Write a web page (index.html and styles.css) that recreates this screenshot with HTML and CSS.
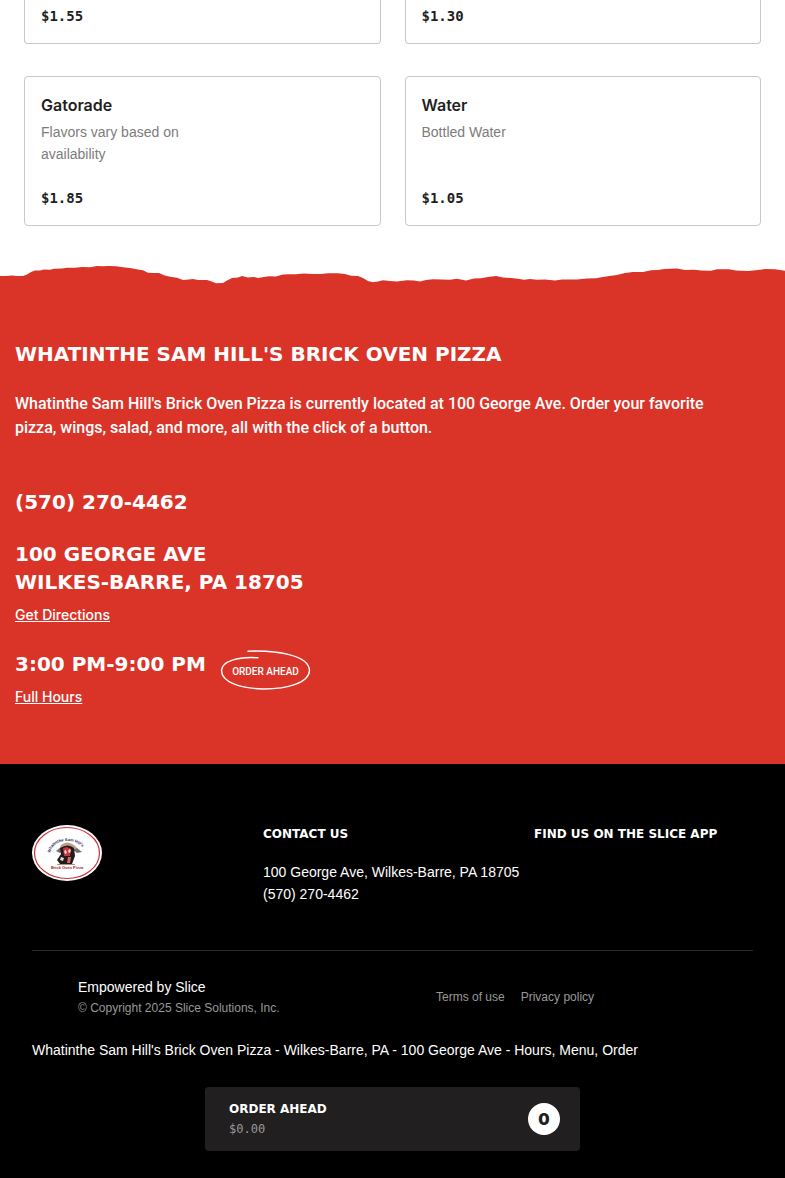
FILE: index.html
```html
<!DOCTYPE html>
<html lang="en">
<head>
<meta charset="utf-8">
<meta name="viewport" content="width=device-width, initial-scale=1">
<title>Whatinthe Sam Hill's Brick Oven Pizza</title>
<link rel="stylesheet" href="styles.css">
</head>
<body>
<main class="menu">
  <article class="card card-cut"><p class="price">$1.55</p></article>
  <article class="card card-cut"><p class="price">$1.30</p></article>
  <article class="card">
    <h3 class="name">Gatorade</h3>
    <p class="desc">Flavors vary based on availability</p>
    <p class="price">$1.85</p>
  </article>
  <article class="card">
    <h3 class="name">Water</h3>
    <p class="desc">Bottled Water</p>
    <p class="price">$1.05</p>
  </article>
</main>

<svg class="edge" viewBox="0 0 785 30" preserveAspectRatio="none" aria-hidden="true">
  <path fill="#da3429" d="M0 11 L6 11 L12 10.500 L17 11 L23 11 L27 9.500 L31 7 L35 5.500 L40 5.500 L44 4.500 L50 4.700 L54 3.800 L62 3.500 L67 2.800 L75 2.700 L82 2 L90 2.200 L97 1 L103 1.300 L109 1 L116 1.200 L123 2.300 L130 3 L138 4.500 L143 5.300 L148 7.700 L153 8 L159 8 L164 10.300 L170 11.700 L177 12.800 L183 15 L189 14.500 L193 14 L198 15 L207 15 L211 16.300 L216 18.200 L223 18 L227 15.500 L232 13 L238 12.500 L242 11 L248 12.400 L254 12 L258 13 L264 12 L269 11.300 L276 11.500 L283 9.500 L289 9.200 L296 9.300 L304 8.500 L312 9 L321 9 L328 8.200 L338 8.200 L345 9 L351 10.700 L358 11 L363 13 L368 16 L373 17.300 L378 16.600 L383 15.300 L390 16 L397 16.500 L407 15.300 L414 15.600 L420 16.500 L426 15 L433 14.300 L442 14.400 L450 14.800 L457 13.700 L466 15.500 L474 13.600 L481 13.200 L488 12 L496 11 L503 12.500 L511 13 L518 13.800 L524 14.800 L530 14 L537 14.700 L545 14.500 L555 15.600 L562 14.400 L577 14.600 L587 13.500 L596 13.200 L606 11.500 L617 10 L625 8 L633 7 L643 7 L651 5.200 L658 5 L664 4 L677 3.400 L685 5 L694 4.800 L701 5.600 L711 5.700 L717 4.300 L729 4.200 L736 5.600 L748 6 L758 5 L765 4 L775 4.200 L785 5.800 L785 30 L0 30 Z"/>
</svg>

<section class="about">
  <h2 class="title">WHATINTHE SAM HILL'S BRICK OVEN PIZZA</h2>
  <p class="blurb">Whatinthe Sam Hill's Brick Oven Pizza is currently located at 100 George Ave. Order your favorite pizza, wings, salad, and more, all with the click of a button.</p>
  <p class="title">(570) 270-4462</p>
  <address class="place">
    <p class="title">100 GEORGE AVE<br>WILKES-BARRE, PA 18705</p>
    <a class="more" href="#directions">Get Directions</a>
  </address>
  <div>
    <div class="hours">
      <p class="title">3:00 PM-9:00 PM</p>
      <svg class="ahead" viewBox="0 0 92 42" role="img" aria-label="Order ahead">
        <path fill="none" stroke="#fff" stroke-width="1.400" stroke-linecap="round" d="M28 1.200 C56 0 89 5 89.500 20.500 C89 33 67 39 44 39 C20 38.500 1.500 32 1.500 20.500 C2 11 18 6.500 38 7.800"/>
        <text class="ahead-text" x="45.500" y="25" text-anchor="middle">ORDER AHEAD</text>
      </svg>
    </div>
    <a class="more" href="#hours">Full Hours</a>
  </div>
</section>

<footer class="footer">
  <div class="columns">
    <svg class="logo" viewBox="0 0 70 56" role="img" aria-label="Whatinthe Sam Hill's Brick Oven Pizza">
      <ellipse cx="35" cy="28" rx="35" ry="28" fill="#fff"/>
      <ellipse cx="35" cy="28" rx="32.500" ry="25.500" fill="none" stroke="#c8333a" stroke-width="1.200"/>
      <path id="arc" fill="none" d="M18 28 Q21 16 35 16 Q50 16 54 30"/>
      <text class="logo-arc"><textPath href="#arc">Whatinthe Sam Hill's</textPath></text>
      <path fill="#77706b" d="M24 26 L29 22 L35 24 L28 28 Z M40 24 L45 23 L50 27 L45 28 Z"/>
      <path fill="#b9a184" d="M29 20 Q35 15 42 20 L45 23 L28 23 Z"/>
      <path fill="#221b20" d="M28 23 Q36 18 42 23 L43 31 L40 39 L28 39 L25 35 L29 29 Z"/>
      <path fill="#c8343f" d="M31 23 L35 22 L39 24 L38 31 L32 31 Z"/>
      <path fill="#ead8c9" d="M32 26 L34 25 L35 28 L33 29 Z M37 24 L39 25 L38 28 L36 27 Z M29 32 L32 33 L31 36 L28 35 Z"/>
      <path fill="#d46b55" d="M36 32 L39 32 L38 38 L35 38 Z"/>
      <path fill="#b78c72" d="M25 39 L43 39 L43 40 L25 40 Z"/>
      <text class="logo-base" x="35" y="44" text-anchor="middle">Brick Oven Pizza</text>
    </svg>
    <div>
      <h4 class="heading">CONTACT US</h4>
      <p class="contact">100 George Ave, Wilkes-Barre, PA 18705<br>(570) 270-4462</p>
    </div>
    <h4 class="heading">FIND US ON THE SLICE APP</h4>
  </div>
  <div class="legal">
    <div>
      <p class="empowered">Empowered by Slice</p>
      <p class="small">© Copyright 2025 Slice Solutions, Inc.</p>
    </div>
    <nav class="links">
      <a class="small" href="#terms">Terms of use</a>
      <a class="small" href="#privacy">Privacy policy</a>
    </nav>
  </div>
  <p class="seo">Whatinthe Sam Hill's Brick Oven Pizza - Wilkes-Barre, PA - 100 George Ave - Hours, Menu, Order</p>
  <button class="cart" type="button">
    <span>
      <span class="cart-label">ORDER AHEAD</span>
      <span class="cart-total">$0.00</span>
    </span>
    <span class="cart-count">0</span>
  </button>
</footer>
</body>
</html>
```
FILE: styles.css
```css
* { box-sizing: border-box; }
body {
  margin: 0;
  background: #fff;
  color: #1f1f1f;
  font-family: "Liberation Sans", Arial, sans-serif;
  font-size: 14px;
  line-height: 22px;
}
h2, h3, h4, p { margin: 0; }
a { color: inherit; }

.menu {
  display: grid;
  grid-template-columns: 1fr 1fr;
  gap: 32px 24px;
  padding: 0 24px 39px;
}
.card {
  display: flex;
  flex-direction: column;
  min-height: 150px;
  padding: 16px;
  border: 1px solid #c6c9c8;
  border-radius: 4px;
}
.card-cut {
  min-height: 0;
  padding-top: 5px;
  border-top: 0;
  border-radius: 0 0 4px 4px;
}
.name {
  margin-bottom: 4px;
  font-family: Inter, sans-serif;
  font-size: 16px;
  font-weight: 600;
  line-height: 24px;
}
.desc { max-width: 180px; color: #7c7c7c; }
.price {
  margin-top: auto;
  font-family: "DejaVu Sans Mono", monospace;
  font-weight: 700;
}

.edge { display: block; width: 100%; height: 30px; }
.about {
  display: flex;
  flex-direction: column;
  gap: 24px;
  padding: 45px 15px 56px;
  background: #da3429;
  color: #fff;
}
.title {
  font-family: "DejaVu Sans", Verdana, sans-serif;
  font-size: 20px;
  font-weight: 700;
  line-height: 28px;
}
.blurb {
  max-width: 720px;
  margin-bottom: 24px;
  font-family: Roboto, sans-serif;
  font-size: 16px;
  font-weight: 500;
  line-height: 24px;
}
.place { font-style: normal; }
.more {
  display: inline-block;
  margin-top: 8px;
  font-family: Inter, sans-serif;
  font-weight: 500;
}
.hours { display: flex; gap: 14px; height: 28px; }
.ahead { width: 92px; height: 42px; }
.ahead-text { fill: #fff; font-family: Roboto, sans-serif; font-size: 10px; font-weight: 500; }

.footer {
  padding: 60px 32px 27px;
  background: #000;
  color: #fff;
}
.columns {
  display: grid;
  grid-template-columns: 231fr 271fr 219fr;
  align-items: start;
  padding-bottom: 45px;
  border-bottom: 1px solid #2b2b2b;
}
.logo { width: 70px; height: 56px; margin-top: 1px; }
.logo-arc { fill: #25255f; font-size: 4px; font-weight: 700; }
.logo-base { fill: #a32532; font-size: 4px; font-weight: 700; }
.heading, .cart-label {
  font-family: "DejaVu Sans", Verdana, sans-serif;
  font-size: 12px;
  font-weight: 700;
  line-height: 20px;
}
.contact { margin-top: 17px; }
.legal {
  display: grid;
  grid-template-columns: 358fr 317fr;
  align-items: center;
  padding: 25px 0 0 46px;
}
.small { color: #999; font-size: 12px; line-height: 20px; text-decoration: none; }
.links { display: flex; gap: 16px; }
.seo { margin-top: 21px; }
.cart {
  display: flex;
  align-items: center;
  justify-content: space-between;
  width: 375px;
  max-width: 100%;
  height: 64px;
  margin: 26px auto 0;
  padding: 0 20px 0 24px;
  border: 0;
  border-radius: 4px;
  background: #211f20;
  color: #fff;
  text-align: left;
}
.cart-label, .cart-total { display: block; line-height: 20px; }
.cart-total {
  color: #999;
  font-family: "DejaVu Sans Mono", monospace;
  font-size: 12px;
}
.cart-count {
  width: 32px;
  border-radius: 50%;
  background: #fff;
  color: #1f1f1f;
  font-family: Inter, sans-serif;
  font-size: 16px;
  font-weight: 900;
  line-height: 32px;
  text-align: center;
}
```
